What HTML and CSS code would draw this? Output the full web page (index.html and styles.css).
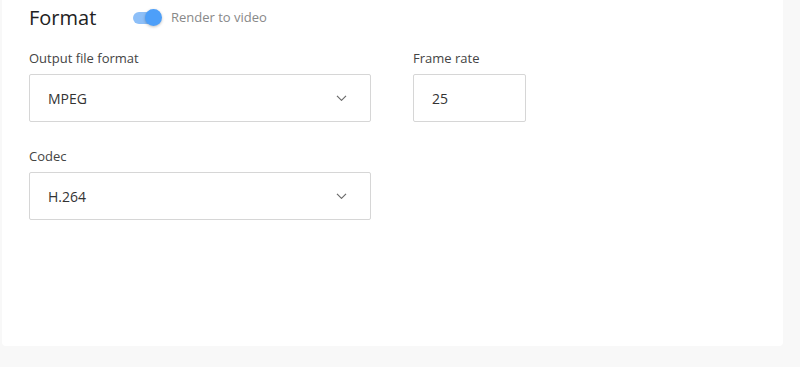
FILE: index.html
```html
<!DOCTYPE html>
<html>
<head>
<meta charset="utf-8">
<link rel="stylesheet" href="styles.css">
</head>
<body>
<div class="card">
  <div class="header">
    <h2 class="title">Format</h2>
    <div class="toggle"><span class="track"></span><span class="knob"></span></div>
    <span class="toggle-label">Render to video</span>
  </div>
  <div class="row">
    <div class="field wide">
      <label class="label">Output file format</label>
      <div class="control">
        <span>MPEG</span>
        <svg class="chev" width="11" height="6" viewBox="0 0 11 6"><path d="M1 0.8l4.5 4.5 4.5-4.5" fill="none" stroke="#6a6a6a" stroke-width="1.2"/></svg>
      </div>
    </div>
    <div class="field narrow">
      <label class="label">Frame rate</label>
      <div class="control"><span>25</span></div>
    </div>
  </div>
  <div class="row">
    <div class="field wide">
      <label class="label">Codec</label>
      <div class="control">
        <span>H.264</span>
        <svg class="chev" width="11" height="6" viewBox="0 0 11 6"><path d="M1 0.8l4.5 4.5 4.5-4.5" fill="none" stroke="#6a6a6a" stroke-width="1.2"/></svg>
      </div>
    </div>
  </div>
</div>
</body>
</html>
```
FILE: styles.css
```css
html, body { margin: 0; padding: 0; }
body {
  background: #f8f8f8;
  font-family: "Open Sans", "Noto Sans", sans-serif;
  color: #333;
  width: 800px;
  height: 367px;
  overflow: hidden;
}
.card {
  margin-left: 2px;
  width: 781px;
  height: 346px;
  background: #fff;
  border-radius: 0 0 4px 4px;
  box-sizing: border-box;
  padding: 3px 0 0 27px;
}
.header {
  display: flex;
  align-items: center;
  height: 28px;
}
.title {
  margin: 0;
  font-size: 20px;
  font-weight: 400;
  color: #222;
  width: 104px;
}
.toggle {
  position: relative;
  width: 30px;
  height: 18px;
  top: 1px;
}
.track {
  position: absolute;
  left: 0;
  top: 3px;
  width: 22px;
  height: 12px;
  border-radius: 6px;
  background: #8dbff8;
}
.knob {
  position: absolute;
  left: 12px;
  top: 0;
  width: 17px;
  height: 17px;
  border-radius: 50%;
  background: #4d9ff9;
  box-shadow: 0 1px 3px rgba(0,0,0,0.25);
}
.toggle-label {
  margin-left: 8px;
  font-size: 13px;
  color: #888;
}
.row {
  display: flex;
  gap: 42px;
  margin-top: 18px;
}
.row + .row { margin-top: 25px; }
.field { display: flex; flex-direction: column; }
.label {
  font-size: 13px;
  color: #444;
  line-height: 18px;
  margin-bottom: 7px;
}
.control {
  box-sizing: border-box;
  height: 48px;
  border: 1px solid #d6d6d6;
  border-radius: 2px;
  display: flex;
  align-items: center;
  justify-content: space-between;
  padding: 0 23px 0 18px;
  font-size: 14px;
  color: #333;
}
.wide .control { width: 342px; }
.narrow .control { width: 113px; }
```
